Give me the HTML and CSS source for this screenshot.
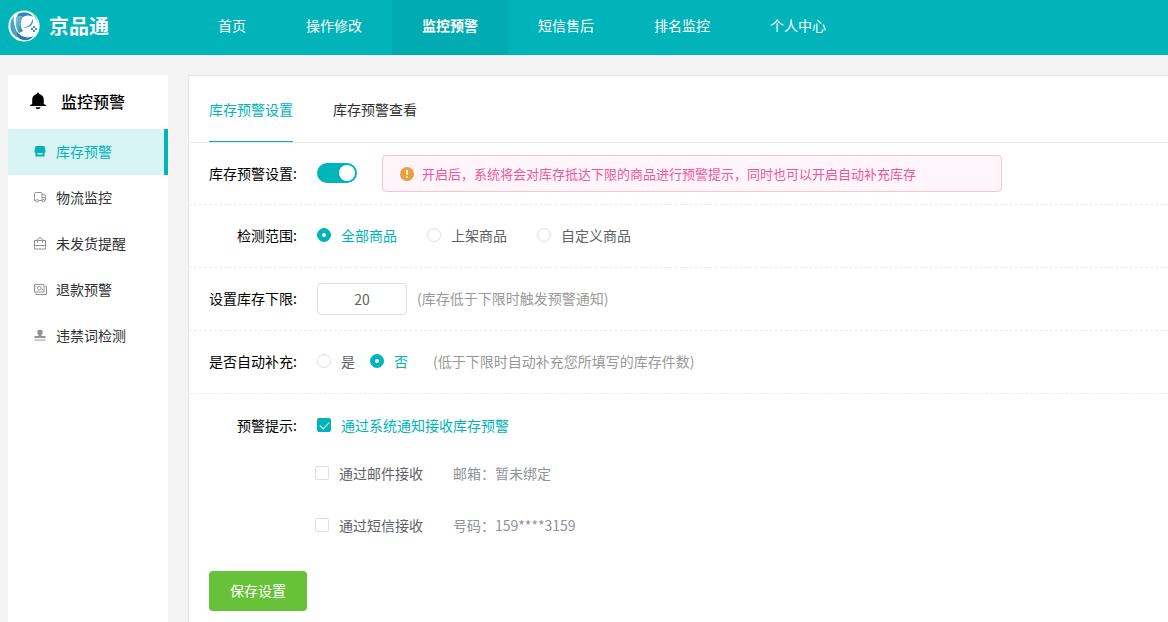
FILE: index.html
```html
<!DOCTYPE html>
<html lang="zh-CN">
<head>
<meta charset="utf-8">
<meta name="viewport" content="width=device-width, initial-scale=1">
<title>京品通</title>
<link rel="stylesheet" href="styles.css">
</head>
<body>
<header class="header">
  <a class="brand" href="#">
    <svg class="brand-logo" viewBox="0 0 32 32" aria-hidden="true">
      <defs>
        <linearGradient id="swirl" x1="0" y1="0" x2="1" y2="1">
          <stop offset="0" stop-color="#8ccbd6"/>
          <stop offset="0.6" stop-color="#4a9fc4"/>
          <stop offset="1" stop-color="#2474ad"/>
        </linearGradient>
      </defs>
      <circle cx="16" cy="16" r="15.600" fill="#fff"/>
      <path d="M6 6C1 11 1 20 6 25c3 3 7 4 11 3-5-2-9-6-10-11C6 13 5 10 6 6z" fill="#4aa3c0"/>
      <path d="M8 7c-1 7 0 12 3 16l4-2C12 17 12 11 15 7c-2-1-5-1-7 0z" fill="url(#swirl)"/>
      <path d="M10 4c6-3 13-1 15 3-4-2-7-2-10 0-2-1-4-1-6 0z" fill="#2e86b8"/>
      <path d="M25 9c1 5-3 9-10 9 4-1 7-3 8-5 1-2 1-3 2-4z" fill="#3d95bf"/>
      <path d="M23 3c5 2 7 7 7 11-1-4-3-8-7-11z" fill="#79c0d2"/>
      <path d="M9 22c4 5 11 7 17 4-4 5-12 6-16 1-1-1-1-3-1-5z" fill="#2879b0"/>
      <path d="M25 16h2v2h-2zM23 18h2v2h-2zM27 18h2v2h-2zM25 20h2v2h-2z" fill="#4a8ebc"/>
    </svg>
    <span class="brand-name">京品通</span>
  </a>
  <nav class="nav" aria-label="主导航">
    <a class="nav-item" href="#">首页</a>
    <a class="nav-item" href="#">操作修改</a>
    <a class="nav-item nav-item-active" href="#" aria-current="page">监控预警</a>
    <a class="nav-item" href="#">短信售后</a>
    <a class="nav-item" href="#">排名监控</a>
    <a class="nav-item" href="#">个人中心</a>
  </nav>
</header>

<div class="layout">
  <aside class="sidebar">
    <h2 class="side-title">
      <svg class="side-title-icon" viewBox="0 0 16 18" aria-hidden="true">
        <path d="M7 1.500a1 1 0 0 1 2 0v.6c3 .5 4.800 2.800 4.800 5.600V12l2.200 1.200V14H0v-.8L2.200 12V7.700c0-2.800 1.800-5.100 4.800-5.600zM5.500 15.300h5c-.4 1.300-1.300 2-2.500 2s-2.100-.7-2.500-2z"/>
      </svg>
      监控预警
    </h2>
    <nav class="side-menu" aria-label="监控预警">
      <a class="side-item side-item-active" href="#" aria-current="page">
        <svg class="side-icon" viewBox="0 0 14 14" aria-hidden="true">
          <path fill="currentColor" d="M2.500 2h9l1 5.500c0 1-.5 1.500-1.200 1.500H2.700C2 9 1.500 8.500 1.500 7.500z"/>
          <path fill="currentColor" d="M2.500 9h2v1.500h5V9h2v3.500h-9z"/>
        </svg>
        库存预警
      </a>
      <a class="side-item" href="#">
        <svg class="side-icon" viewBox="0 0 14 14" fill="none" stroke="currentColor" aria-hidden="true">
          <path d="M3 10.500H1.500V3.500q0-1 1-1H8q1 0 1 1v7H5.500M9 4.500h2q1.500 0 1.500 2v4M9 7.500h3.500"/>
          <circle cx="4.200" cy="10.800" r="1.300"/><circle cx="10.500" cy="10.800" r="1.300"/>
        </svg>
        物流监控
      </a>
      <a class="side-item" href="#">
        <svg class="side-icon" viewBox="0 0 14 14" fill="none" stroke="currentColor" aria-hidden="true">
          <path d="M1.500 4.500h11v8.500h-11zM1.500 9.500h11M4.500 6.500V4Q5 1.500 7 1.500T9.500 4v2.500"/>
        </svg>
        未发货提醒
      </a>
      <a class="side-item" href="#">
        <svg class="side-icon" viewBox="0 0 14 14" fill="none" stroke="currentColor" aria-hidden="true">
          <path d="M1.500 2.500h9.500v7.500H1.500zM12 4.500h1.500v8H3V11"/>
          <circle cx="6.300" cy="6.200" r="1.800"/><path d="M3 4v1M9.500 8V7"/>
        </svg>
        退款预警
      </a>
      <a class="side-item" href="#">
        <svg class="side-icon" viewBox="0 0 14 14" fill="currentColor" aria-hidden="true">
          <path d="M7 1.500a2.900 2.900 0 0 1 1.600 5.300L8.500 8H12q.5 0 .5.500V10h-11V8.500Q1.500 8 2 8h3.500l-.1-1.200A2.900 2.900 0 0 1 7 1.500zM1.500 11.500h11v1h-11z"/>
        </svg>
        违禁词检测
      </a>
    </nav>
  </aside>

  <main class="panel">
    <nav class="tabs" aria-label="库存预警">
      <a class="tab tab-active" href="#" aria-current="page">库存预警设置</a>
      <a class="tab" href="#">库存预警查看</a>
    </nav>
    <form class="form">
      <div class="row">
        <label class="row-label" for="warn-switch">库存预警设置:</label>
        <input class="switch" type="checkbox" role="switch" id="warn-switch" checked>
        <p class="notice">
          <svg class="notice-icon" viewBox="0 0 14 14" aria-hidden="true">
            <circle cx="7" cy="7" r="7" fill="#e6a23c"/>
            <path d="M6 3h2l-.4 5H6.400z" fill="#fff"/><circle cx="7" cy="10" r="0.900" fill="#fff"/>
          </svg>
          开启后，系统将会对库存抵达下限的商品进行预警提示，同时也可以开启自动补充库存
        </p>
      </div>
      <div class="row" role="radiogroup" aria-labelledby="scope-label">
        <span class="row-label" id="scope-label">检测范围:</span>
        <div class="options">
          <label class="option"><input class="radio" type="radio" name="scope" checked><span>全部商品</span></label>
          <label class="option"><input class="radio" type="radio" name="scope"><span>上架商品</span></label>
          <label class="option"><input class="radio" type="radio" name="scope"><span>自定义商品</span></label>
        </div>
      </div>
      <div class="row">
        <label class="row-label" for="lower-limit">设置库存下限:</label>
        <div class="field">
          <input class="number" type="text" inputmode="numeric" id="lower-limit" value="20">
          <span class="hint">(库存低于下限时触发预警通知)</span>
        </div>
      </div>
      <div class="row" role="radiogroup" aria-labelledby="refill-label">
        <span class="row-label" id="refill-label">是否自动补充:</span>
        <div class="options options-tight">
          <label class="option"><input class="radio" type="radio" name="refill"><span>是</span></label>
          <label class="option"><input class="radio" type="radio" name="refill" checked><span>否</span></label>
        </div>
        <span class="hint hint-far">(低于下限时自动补充您所填写的库存件数)</span>
      </div>
      <div class="row row-last" role="group" aria-labelledby="notify-label">
        <span class="row-label" id="notify-label">预警提示:</span>
        <div class="channels">
          <div class="channel channel-main">
            <label class="option"><input class="check" type="checkbox" checked><span>通过系统通知接收库存预警</span></label>
          </div>
          <div class="channel">
            <label class="option"><input class="check" type="checkbox"><span>通过邮件接收</span></label>
            <span class="contact">邮箱：暂未绑定</span>
          </div>
          <div class="channel">
            <label class="option"><input class="check" type="checkbox"><span>通过短信接收</span></label>
            <span class="contact">号码：159****3159</span>
          </div>
        </div>
      </div>
      <button class="save" type="button">保存设置</button>
    </form>
  </main>
</div>
</body>
</html>
```
FILE: styles.css
```css
:root {
  --teal: #00b4ba;
  --line: #e4e7ed;
}

* {
  box-sizing: border-box;
}

body {
  margin: 0;
  min-height: 100vh;
  display: flex;
  flex-direction: column;
  background: #f3f3f3;
  color: #303133;
  font: 14px/20px "Noto Sans CJK SC", sans-serif;
}

a {
  color: inherit;
  text-decoration: none;
}

input,
button {
  margin: 0;
  font: inherit;
}

/* Header */
.header {
  display: flex;
  height: 55px;
  background: var(--teal);
  color: #fff;
}

.brand {
  display: flex;
  align-items: center;
  gap: 9px;
  width: 188px;
  padding: 0 0 4px 8px;
}

.brand-logo {
  width: 32px;
  height: 32px;
}

.brand-name {
  font-size: 20px;
  font-weight: 700;
}

.nav {
  display: flex;
}

.nav-item {
  display: flex;
  align-items: center;
  padding: 0 30px 6px;
  white-space: nowrap;
}

.nav-item-active {
  background: #00abb1;
  font-weight: 700;
}

/* Page body */
.layout {
  flex: 1;
  display: flex;
  gap: 20px;
  padding: 20px 0 0 8px;
}

.sidebar {
  flex: 0 0 160px;
  background: #fff;
}

.side-title {
  display: flex;
  align-items: center;
  gap: 15px;
  height: 54px;
  margin: 0;
  padding: 0 0 2px 22px;
  color: #000;
  font-size: 16px;
  font-weight: 500;
}

.side-title-icon {
  width: 16px;
  height: 18px;
}

.side-item {
  display: flex;
  align-items: center;
  gap: 9px;
  height: 46px;
  padding: 0 0 2px 25px;
  border-right: 4px solid transparent;
}

.side-item-active {
  border-color: var(--teal);
  background: #d9f4f4;
  color: var(--teal);
}

.side-icon {
  width: 14px;
  height: 14px;
  color: #909399;
}

.side-item-active .side-icon {
  color: var(--teal);
}

.panel {
  flex: 1;
  min-width: 0;
  border: solid #e6e6e9;
  border-width: 1px 0 0 1px;
  background: #fff;
}

/* Tabs */
.tabs {
  display: flex;
  gap: 40px;
  height: 67px;
  padding: 0 20px;
  border-bottom: 1px solid var(--line);
}

.tab {
  display: flex;
  align-items: center;
  border-bottom: 1px solid transparent;
}

.tab-active {
  border-color: var(--teal);
  color: var(--teal);
}

/* Settings form */
.row {
  display: flex;
  align-items: center;
  min-height: 63px;
  padding: 0 20px 2px;
  border-bottom: 1px dashed #ebebeb;
}

.row:first-child {
  min-height: 62px;
}

.row-label {
  flex: 0 0 88px;
  margin-right: 20px;
  color: #000;
  text-align: right;
  white-space: nowrap;
}

.notice {
  flex: 0 1 620px;
  display: flex;
  align-items: center;
  gap: 8px;
  margin: 2px 0 0 25px;
  padding: 8px 17px;
  border: 1px solid #fbc4cf;
  border-radius: 4px;
  background: #fff5fb;
  color: #f0569b;
  font-size: 13px;
  line-height: 19px;
}

.notice-icon {
  flex: none;
  width: 14px;
  height: 14px;
}

.options {
  display: flex;
  gap: 30px;
}

.options-tight {
  gap: 15px;
}

.option {
  display: flex;
  align-items: center;
  gap: 10px;
  color: #606266;
  white-space: nowrap;
}

.option :checked + span {
  color: var(--teal);
}

.radio,
.check,
.switch {
  appearance: none;
  flex: none;
  display: grid;
}

.radio,
.check {
  width: 14px;
  height: 14px;
  place-items: center;
  border: 1px solid #dcdfe6;
  background: #fff;
}

.radio {
  border-radius: 50%;
}

.check {
  border-radius: 2px;
}

.radio:checked,
.check:checked {
  border-color: var(--teal);
  background: var(--teal);
}

.radio:checked::after {
  content: "";
  width: 4px;
  height: 4px;
  border-radius: 50%;
  background: #fff;
}

.check:checked::after {
  content: "";
  width: 4px;
  height: 8px;
  margin-bottom: 2px;
  border: solid #fff;
  border-width: 0 1px 1px 0;
  transform: rotate(45deg);
}

.switch {
  width: 40px;
  height: 20px;
  padding: 2px;
  align-items: center;
  border-radius: 10px;
  background: #dcdfe6;
}

.switch::after {
  content: "";
  width: 16px;
  height: 16px;
  border-radius: 50%;
  background: #fff;
}

.switch:checked {
  justify-items: end;
  background: var(--teal);
}

.field {
  display: flex;
  align-items: center;
  gap: 10px;
}

.number {
  width: 90px;
  height: 32px;
  margin-top: 2px;
  padding: 0 15px;
  border: 1px solid #dcdfe6;
  border-radius: 4px;
  color: #606266;
  text-align: center;
}

.hint {
  color: #999;
}

.hint-far {
  margin-left: 25px;
}

.row-last {
  align-items: flex-start;
  padding-top: 9px;
  padding-bottom: 0;
  border-bottom: 0;
}

.row-last .row-label {
  line-height: 44px;
}

.channel {
  display: flex;
  align-items: center;
  gap: 30px;
  min-height: 52px;
  margin-left: -2px;
}

.channel-main {
  min-height: 44px;
  margin-left: 0;
}

.contact {
  color: #909399;
}

.save {
  height: 40px;
  margin: 20px 20px 10px;
  padding: 0 21px 2px;
  border: 0;
  border-radius: 4px;
  background: #67c23a;
  color: #fff;
}
```
